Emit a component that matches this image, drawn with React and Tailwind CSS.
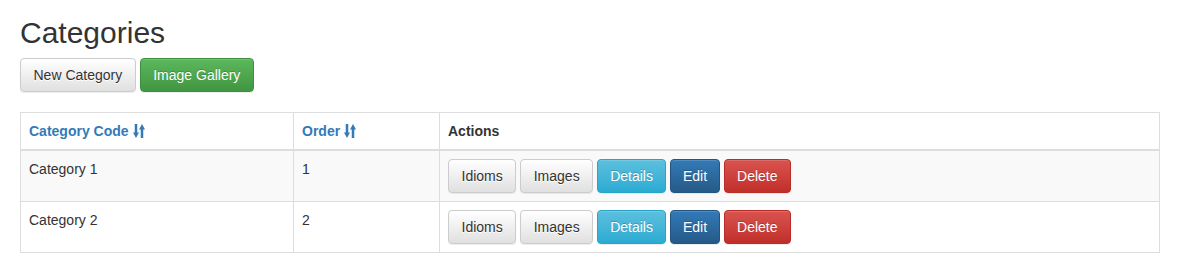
const btnBase =
  'inline-block rounded-[4px] border py-[6px] text-[14px] leading-[20px] shadow-[inset_0_1px_0_rgba(255,255,255,0.15),0_1px_1px_rgba(0,0,0,0.075)]';

const variants = {
  default:
    'bg-gradient-to-b from-white to-[#e0e0e0] border-[#ccc] text-[#333] [text-shadow:0_1px_0_#fff]',
  success:
    'bg-gradient-to-b from-[#5cb85c] to-[#419641] border-[#3e8f3e] text-white [text-shadow:0_-1px_0_rgba(0,0,0,0.2)]',
  info: 'bg-gradient-to-b from-[#5bc0de] to-[#2aabd2] border-[#28a4c9] text-white [text-shadow:0_-1px_0_rgba(0,0,0,0.2)]',
  primary:
    'bg-gradient-to-b from-[#337ab7] to-[#265a88] border-[#245580] text-white [text-shadow:0_-1px_0_rgba(0,0,0,0.2)]',
  danger:
    'bg-gradient-to-b from-[#d9534f] to-[#c12e2a] border-[#b92c28] text-white [text-shadow:0_-1px_0_rgba(0,0,0,0.2)]',
};

const Btn = ({ kind = 'default', wide = false, children }) => (
  <button type="button" className={`${btnBase} ${wide ? 'px-[12.5px]' : 'px-3'} ${variants[kind]}`}>
    {children}
  </button>
);

const SortIcon = () => (
  <svg width="12" height="14" viewBox="0 0 12 14" className="ml-[4px] inline-block align-[-2px]" fill="#337ab7">
    {/* down arrow */}
    <rect x="1.75" y="0" width="2.5" height="10" />
    <polygon points="0,8.5 6,8.5 3,14" />
    {/* up arrow */}
    <rect x="7.75" y="4" width="2.5" height="10" />
    <polygon points="6,5.5 12,5.5 9,0" />
  </svg>
);

const rows = [
  { name: 'Category 1', order: 1 },
  { name: 'Category 2', order: 2 },
];

export default function App() {
  return (
    <div className="bg-white px-5 pb-[27px] font-['Liberation_Sans',Arial,sans-serif] text-[14px] leading-[20px] text-[#333]">
      <h2 className="pt-[16px] text-[30px] leading-[33px] font-normal">Categories</h2>
      <div className="mt-[9px] flex gap-1">
        <Btn wide>New Category</Btn>
        <Btn kind="success" wide>
          Image Gallery
        </Btn>
      </div>

      <table className="mt-[20px] w-[1140px] border-collapse border border-[#ddd]">
        <thead>
          <tr>
            <th className="w-[273px] border border-b-2 border-[#ddd] p-2 text-left font-bold">
              <span className="text-[#337ab7]">
                Category Code
                <SortIcon />
              </span>
            </th>
            <th className="w-[146px] border border-b-2 border-[#ddd] p-2 text-left font-bold">
              <span className="text-[#337ab7]">
                Order
                <SortIcon />
              </span>
            </th>
            <th className="border border-b-2 border-[#ddd] p-2 text-left font-bold">Actions</th>
          </tr>
        </thead>
        <tbody>
          {rows.map((r, i) => (
            <tr key={r.name} className={i % 2 === 0 ? 'bg-[#f9f9f9]' : 'bg-white'}>
              <td className="border border-[#ddd] p-2 align-top">{r.name}</td>
              <td className="border border-[#ddd] p-2 align-top">{r.order}</td>
              <td className="border border-[#ddd] p-2 align-top">
                <div className="flex gap-1">
                  <Btn wide>Idioms</Btn>
                  <Btn wide>Images</Btn>
                  <Btn kind="info">Details</Btn>
                  <Btn kind="primary">Edit</Btn>
                  <Btn kind="danger">Delete</Btn>
                </div>
              </td>
            </tr>
          ))}
        </tbody>
      </table>
    </div>
  );
}
